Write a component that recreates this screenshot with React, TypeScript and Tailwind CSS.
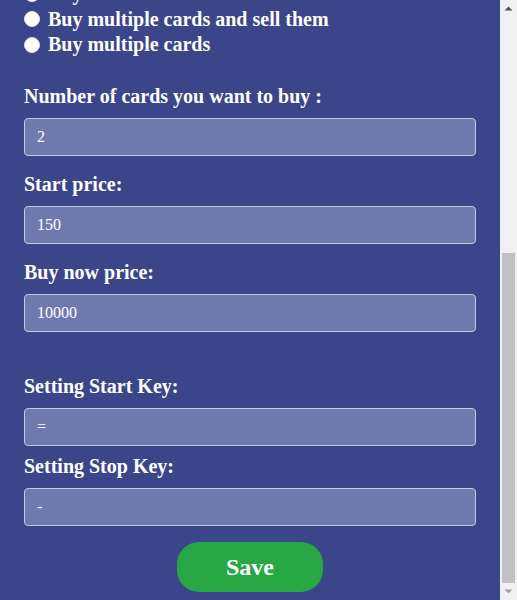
import React, { useLayoutEffect, useRef } from "react";

function Field({ label, value, className = "" }: { label: string; value: string; className?: string }) {
  return (
    <div className={className}>
      <label className="block text-[20px] leading-[24px] font-bold text-white">{label}</label>
      <input
        type="text"
        defaultValue={value}
        className="mt-[10px] block w-full h-[38px] px-3 rounded-[4px] border border-[#c6c9de] bg-[#6e79ad] text-[16px] text-white outline-none font-['Liberation_Serif',serif]"
      />
    </div>
  );
}

function Radio({ label, name, checked = false }: { label: string; name: string; checked?: boolean }) {
  return (
    <label className="flex items-center gap-2 text-[20px] leading-[25.5px] font-bold text-white">
      <input
        type="radio"
        name={name}
        defaultChecked={checked}
        className="appearance-none w-4 h-4 rounded-full bg-white border border-[#e4e4ee] checked:border-[5px] checked:border-[#0075ff] shrink-0"
      />
      <span>{label}</span>
    </label>
  );
}

function Arrow({ up, color }: { up: boolean; color: string }) {
  return (
    <svg width="17" height="17" viewBox="0 0 17 17">
      {up ? (
        <polygon points="4.5,10.5 12.5,10.5 8.5,6.5" fill={color} />
      ) : (
        <polygon points="4.5,6.5 12.5,6.5 8.5,10.5" fill={color} />
      )}
    </svg>
  );
}

export default function App() {
  const ref = useRef<HTMLDivElement>(null);
  useLayoutEffect(() => {
    if (ref.current) ref.current.scrollTop = ref.current.scrollHeight;
  }, []);

  return (
    <div className="flex h-[600px] font-['Liberation_Serif',serif]">
      <div ref={ref} className="flex-1 overflow-y-scroll bg-[#3a4689]">
        <div className="px-6 pt-5 pb-2">
          <h1 className="text-[32px] leading-[40px] font-bold text-white text-center">Auto Buyer Settings</h1>
          <div className="mt-5 flex flex-col gap-4">
            <Field label="Player name:" value="" />
            <Field label="Rating:" value="" />
            <Field label="Max bid:" value="" />
            <Field label="Min bid:" value="" />
            <Field label="Delay (ms):" value="" />
          </div>
          <div className="mt-4 text-[20px] leading-[24px] font-bold text-white">Mode:</div>
          <div className="mt-[17px] flex flex-col">
            <Radio name="mode" label="Buy one card and sell it" />
            <Radio name="mode" label="Buy multiple cards and sell them" />
            <Radio name="mode" label="Buy multiple cards" />
          </div>

          <Field className="mt-[26px]" label="Number of cards you want to buy :" value="2" />
          <Field className="mt-4" label="Start price:" value="150" />
          <Field className="mt-4" label="Buy now price:" value="10000" />

          <Field className="mt-[42px]" label="Setting Start Key:" value="=" />
          <Field className="mt-2" label="Setting Stop Key:" value="-" />

          <div className="mt-4 flex justify-center">
            <button
              type="button"
              className="w-[146px] h-[50px] rounded-[22px] bg-[#28a745] text-white text-[24px] font-bold font-['Liberation_Serif',serif]"
            >
              Save
            </button>
          </div>
        </div>
      </div>
      <div className="w-[17px] shrink-0 flex flex-col bg-[#f1f1f1]">
        <Arrow up color="#505050" />
        <div className="flex-1 flex flex-col justify-end px-[2px]">
          <div className="h-[330px] bg-[#c1c1c1]" />
        </div>
        <Arrow up={false} color="#a3a3a3" />
      </div>
    </div>
  );
}
